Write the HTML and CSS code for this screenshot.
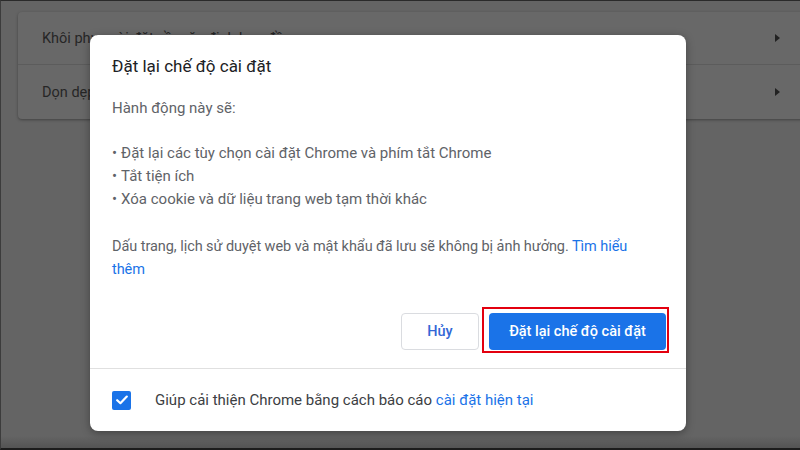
FILE: index.html
```html
<!DOCTYPE html>
<html lang="vi">
<head>
    <meta charset="UTF-8">
    <title>Đặt lại chế độ cài đặt</title>
    <link rel="stylesheet" href="styles.css">
</head>
<body>
    <div class="screen">
        <!-- Settings card behind the dim overlay -->
        <div class="settings-card">
            <div class="settings-row">
                <span>Khôi phục cài đặt về mặc định ban đầu</span>
                <span class="arrow"></span>
            </div>
            <div class="settings-row">
                <span>Dọn dẹp máy tính</span>
                <span class="arrow"></span>
            </div>
        </div>

        <!-- Reset dialog -->
        <div class="dialog">
            <div class="dialog-body">
                <h2 class="dialog-title">Đặt lại chế độ cài đặt</h2>
                <p class="intro">Hành động này sẽ:</p>
                <ul class="effects">
                    <li>Đặt lại các tùy chọn cài đặt Chrome và phím tắt Chrome</li>
                    <li>Tắt tiện ích</li>
                    <li>Xóa cookie và dữ liệu trang web tạm thời khác</li>
                </ul>
                <p class="note">Dấu trang, lịch sử duyệt web và mật khẩu đã lưu sẽ không bị ảnh hưởng. <a href="#">Tìm hiểu thêm</a></p>
                <div class="actions">
                    <button class="btn-cancel">Hủy</button>
                    <button class="btn-reset">Đặt lại chế độ cài đặt</button>
                </div>
            </div>
            <div class="dialog-footer">
                <span class="checkbox">
                    <svg width="12" height="10" viewBox="0 0 12 10"><path d="M1.2 5.2 L4.4 8.2 L10.8 1.6" fill="none" stroke="#fff" stroke-width="2.2" stroke-linecap="round" stroke-linejoin="round"/></svg>
                </span>
                <span>Giúp cải thiện Chrome bằng cách báo cáo <a href="#">cài đặt hiện tại</a></span>
            </div>
        </div>
    </div>
</body>
</html>
```

FILE: styles.css
```css
/* Page */
body {
    margin: 0;
    font-family: Roboto, "Noto Sans", Arial, sans-serif;
}

.screen {
    position: relative;
    width: 800px;
    height: 450px;
    box-sizing: border-box;
    overflow: hidden;
    border-top: 1px solid #2a2a2a;
    border-left: 1px solid #3c3c3c;
    border-bottom: 2px solid #1c1c1c;
    background: linear-gradient(to bottom, #646464 0, #646464 435px, #545454 447px);
    padding-top: 11px;
}

/* Dimmed settings card */
.settings-card {
    margin-left: 17px;
    width: 800px;
    background: #686868;
    border-radius: 4px;
    box-shadow: 0 1px 3px rgba(0, 0, 0, 0.35);
}

.settings-row {
    height: 54px;
    display: flex;
    align-items: center;
    justify-content: space-between;
    padding-left: 24px;
    font-size: 14.5px;
    color: #262626;
}

.settings-row:first-child {
    height: 52px;
}

.settings-row + .settings-row {
    border-top: 1px solid #5c5c5c;
}

.arrow {
    margin-right: 38px;
    width: 0;
    height: 0;
    border-top: 4.5px solid transparent;
    border-bottom: 4.5px solid transparent;
    border-left: 5px solid #222;
}

/* Dialog */
.dialog {
    position: absolute;
    left: 89px;
    top: 34px;
    width: 596px;
    height: 396px;
    background: #fff;
    border-radius: 8px;
    box-shadow: 0 2px 8px rgba(0, 0, 0, 0.35);
    display: flex;
    flex-direction: column;
}

.dialog-body {
    padding: 19px 20px 0 22px;
    flex: 1;
}

.dialog-title {
    margin: 0;
    font-size: 17px;
    font-weight: normal;
    line-height: 24px;
    color: #202124;
}

.intro,
.effects,
.note {
    font-size: 15px;
    line-height: 23px;
    color: #5f6368;
}

.intro {
    margin: 19px 0 0;
}

.effects {
    list-style: none;
    margin: 22px 0 0;
    padding: 0;
}

.effects li::before {
    content: "\2022";
    margin-right: 4px;
}

.note {
    margin: 24px 0 0;
    padding-right: 10px;
    font-size: 14.5px;
    letter-spacing: -0.06px;
}

a {
    color: #1a73e8;
    text-decoration: none;
}

.actions {
    margin-top: 32px;
    display: flex;
    justify-content: flex-end;
    gap: 10px;
}

.actions button {
    height: 37px;
    border-radius: 4px;
    font-family: inherit;
    font-size: 14.5px;
    font-weight: 500;
}

.btn-cancel {
    width: 78px;
    background: #fff;
    border: 1px solid #dadce0;
    color: #3367d6;
}

.btn-reset {
    position: relative;
    width: 177px;
    background: #1a73e8;
    border: none;
    color: #fff;
}

/* red highlight frame around the button */
.btn-reset::after {
    content: "";
    position: absolute;
    left: -7px;
    top: -6px;
    right: -3px;
    bottom: -3px;
    border: 2px solid #e3000f;
}

.dialog-footer {
    height: 62px;
    border-top: 1px solid #e0e0e0;
    display: flex;
    align-items: center;
    padding-left: 22px;
    gap: 24px;
    font-size: 15px;
    color: #3c4043;
}

.checkbox {
    width: 19px;
    height: 19px;
    border-radius: 2px;
    background: #1a73e8;
    display: flex;
    align-items: center;
    justify-content: center;
}
```
